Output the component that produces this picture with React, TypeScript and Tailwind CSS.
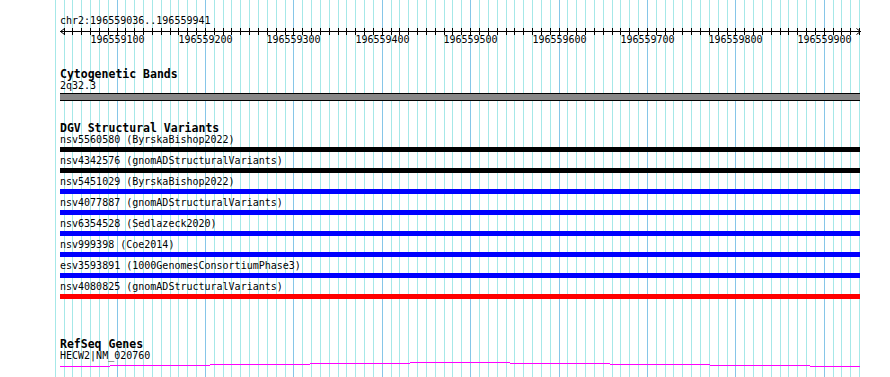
const START = 196559036;
const END = 196559941;
const LEFT = 60;
const WIDTH = 800;

const px = (bp: number) => LEFT + ((bp - START) * WIDTH) / (END - START);

const gridBps: number[] = [];
for (let b = 196559030; b <= 196559940; b += 10) gridBps.push(b);

const majors: number[] = [];
for (let b = 196559100; b <= 196559900; b += 100) majors.push(b);

const variants = [
  { id: "nsv5560580", src: "ByrskaBishop2022", color: "bg-black" },
  { id: "nsv4342576", src: "gnomADStructuralVariants", color: "bg-black" },
  { id: "nsv5451029", src: "ByrskaBishop2022", color: "bg-[#0000ff]" },
  { id: "nsv4077887", src: "gnomADStructuralVariants", color: "bg-[#0000ff]" },
  { id: "nsv6354528", src: "Sedlazeck2020", color: "bg-[#0000ff]" },
  { id: "nsv999398", src: "Coe2014", color: "bg-[#0000ff]" },
  { id: "esv3593891", src: "1000GenomesConsortiumPhase3", color: "bg-[#0000ff]" },
  { id: "nsv4080825", src: "gnomADStructuralVariants", color: "bg-[#ff0000]" },
];

// gene line steps: [x1, x2, y]
const geneSteps = [
  [60, 110, 4],
  [110, 210, 3],
  [210, 310, 2],
  [310, 410, 1],
  [410, 510, 0],
  [510, 610, 1],
  [610, 710, 2],
  [710, 810, 3],
  [810, 860, 4],
];

const genePath = geneSteps.map(([x1, x2, y]) => `M${x1} ${y + 0.5} H${x2}`).join(" ");

function Grid() {
  return (
    <svg className="absolute inset-0 pointer-events-none" width={890} height={377}>
      {gridBps.map((b) => (
        <rect
          key={b}
          x={Math.round(px(b))}
          y={0}
          width={1}
          height={377}
          fill={b % 100 === 0 ? "#86c6e8" : "#a6e8e8"}
        />
      ))}
    </svg>
  );
}

function Ruler() {
  return (
    <div className="relative h-[22px] -ml-[60px]">
      <svg className="absolute left-0 top-0" width={890} height={10}>
        <rect x={60} y={4} width={801} height={1} fill="#000" />
        {gridBps
          .filter((b) => b >= START)
          .map((b) => (
            <rect key={b} x={Math.round(px(b))} y={1} width={1} height={7} fill="#000" />
          ))}
        <path d="M60.5 4.5 L64.5 1.5 M60.5 4.5 L64.5 7.5" stroke="#000" fill="none" />
        <path d="M860.5 4.5 L856.5 1.5 M860.5 4.5 L856.5 7.5" stroke="#000" fill="none" />
      </svg>
      {majors.map((b) => (
        <span
          key={b}
          className="absolute top-[7px] w-[60px] -ml-[30px] text-center text-[10px] leading-[12px]"
          style={{ left: Math.round(px(b)) + 0.5 }}
        >
          {b}
        </span>
      ))}
    </div>
  );
}

function Heading({ children, className = "" }: { children: React.ReactNode; className?: string }) {
  return <div className={`text-[11.5px] leading-[12px] font-bold ${className}`}>{children}</div>;
}

export default function App() {
  return (
    <div className="relative w-[890px] h-[377px] overflow-hidden bg-white text-black font-['DejaVu_Sans_Mono',monospace]">
      <Grid />
      <div className="relative w-[860px] pl-[60px] pt-[15px]">
        <div className="text-[10px] leading-[12px]">chr2:196559036..196559941</div>
        <Ruler />

        <Heading className="mt-[19px]">Cytogenetic Bands</Heading>
        <div className="text-[10px] leading-[12px]">2q32.3</div>
        <div className="mt-[1px] h-[8px] w-[800px] bg-[#888888] border-y border-black" />

        <Heading className="mt-[21px]">DGV Structural Variants</Heading>
        <div className="flex flex-col">
          {variants.map((v) => (
            <div key={v.id} className="flex flex-col pb-[3px]">
              <div className="text-[10px] leading-[12px] whitespace-pre">
                {v.id} ({v.src})
              </div>
              <div className={`mt-[1px] h-[5px] w-[800px] ${v.color}`} />
            </div>
          ))}
        </div>

        <Heading className="mt-[36px]">RefSeq Genes</Heading>
        <div className="text-[10px] leading-[12px]">HECW2|NM_020760</div>
        <svg className="-ml-[60px] block" width={890} height={6}>
          <path d={genePath} stroke="#ff00ff" strokeWidth={1} fill="none" />
        </svg>
      </div>
    </div>
  );
}
